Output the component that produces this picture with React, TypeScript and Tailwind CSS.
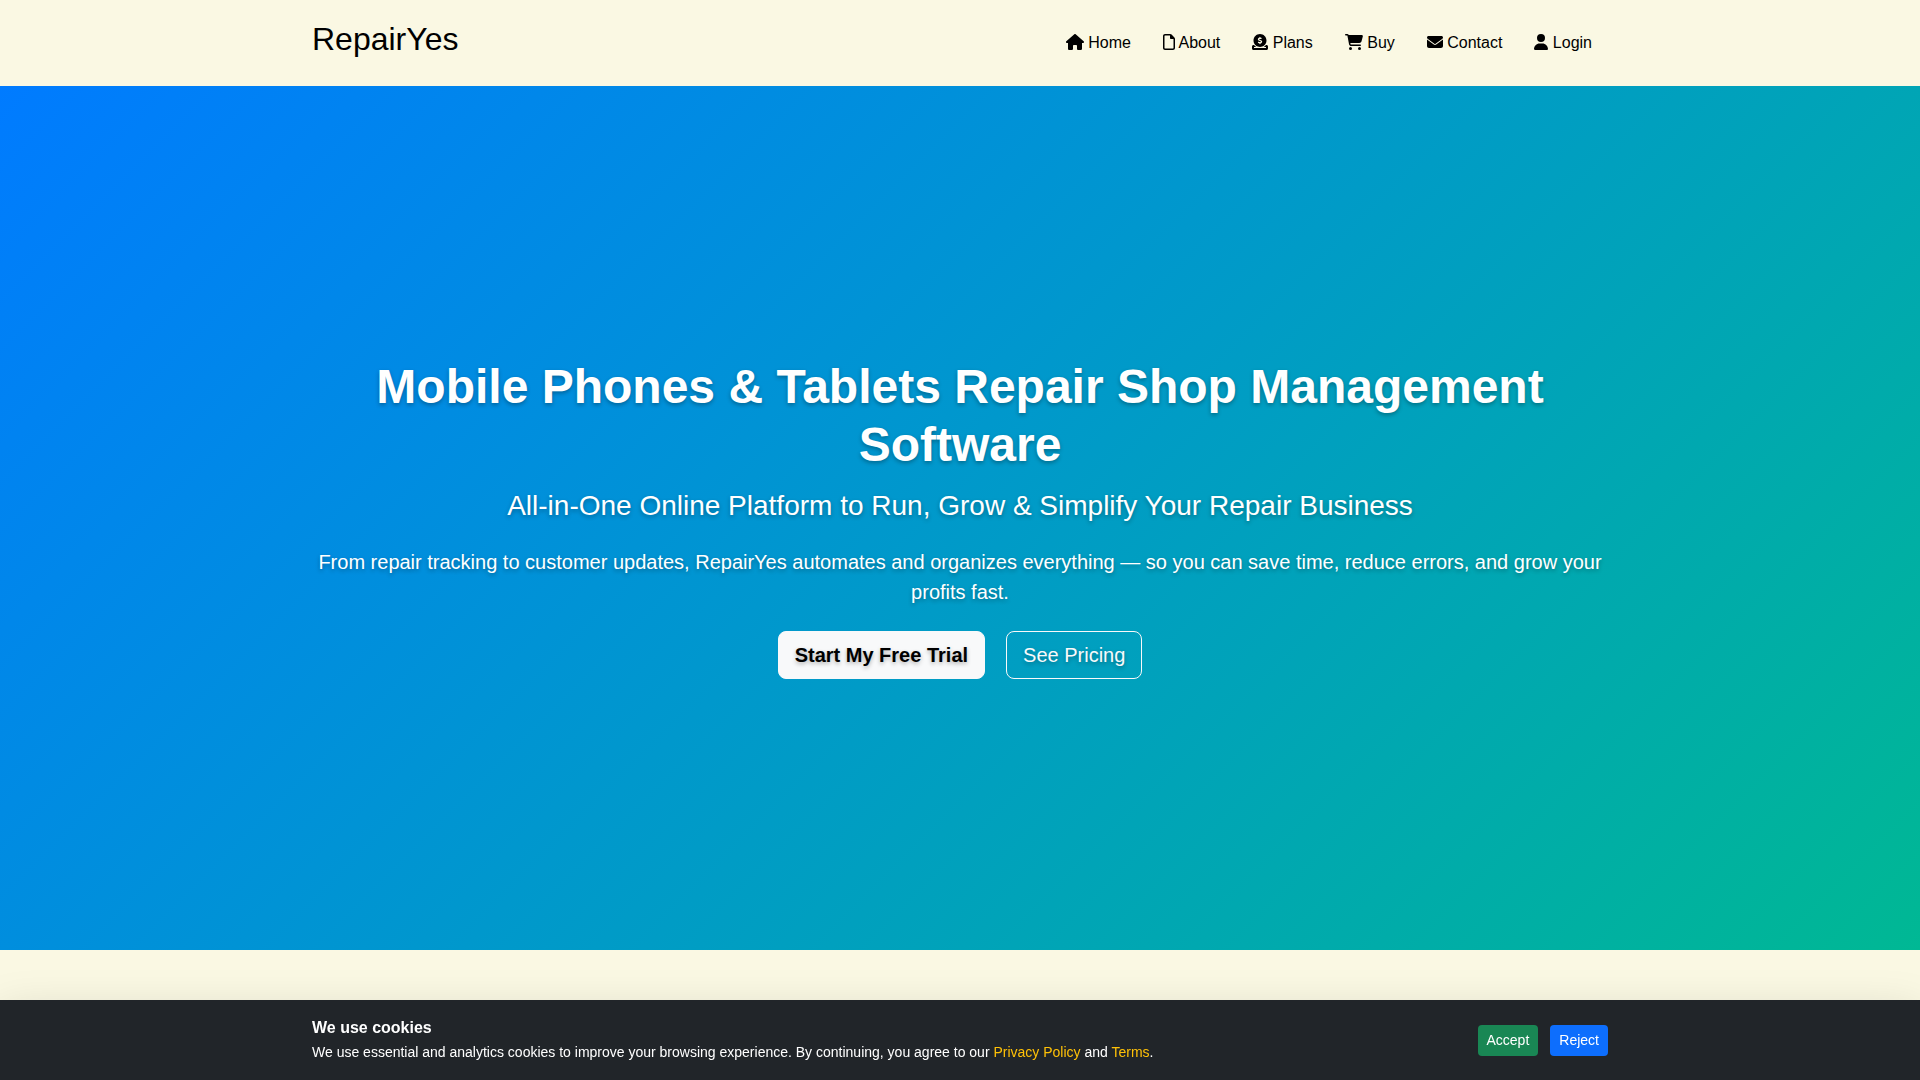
import type { IconType } from 'react-icons';
import {
  FaCartShopping,
  FaCircleDollarToSlot,
  FaEnvelope,
  FaHouse,
  FaRegFile,
  FaUser,
} from 'react-icons/fa6';

interface NavItem {
  label: string;
  href: string;
  icon: IconType;
  iconWidth: string;
}

const navItems: NavItem[] = [
  { label: 'Home', href: '#home', icon: FaHouse, iconWidth: 'w-[18px]' },
  { label: 'About', href: '#about', icon: FaRegFile, iconWidth: 'w-3' },
  { label: 'Plans', href: '#plans', icon: FaCircleDollarToSlot, iconWidth: 'w-4' },
  { label: 'Buy', href: '#buy', icon: FaCartShopping, iconWidth: 'w-[18px]' },
  { label: 'Contact', href: '#contact', icon: FaEnvelope, iconWidth: 'w-4' },
  { label: 'Login', href: '#login', icon: FaUser, iconWidth: 'w-3.5' },
];

function Header() {
  return (
    <header className="py-5">
      <div className="max-w-[1320px] mx-auto px-3 flex items-center justify-between">
        <a href="#home" className="text-[32px] leading-[38px] mb-2">
          RepairYes
        </a>
        <nav className="flex">
          {navItems.map(({ label, href, icon: Icon, iconWidth }) => (
            <a key={label} href={href} className="px-4 text-base whitespace-nowrap">
              <Icon className={`inline-block h-4 align-[-2px] ${iconWidth}`} /> {label}
            </a>
          ))}
        </nav>
      </div>
    </header>
  );
}

function Hero() {
  return (
    <section className="min-h-[80vh] flex items-center bg-[linear-gradient(135deg,#007bff,#00b894)] text-white text-center [text-shadow:0_2px_4px_rgba(0,0,0,0.3)]">
      <div className="w-full max-w-[1320px] mx-auto px-3">
        <h1 className="text-5xl leading-[58px] font-bold mb-[15px]">
          Mobile Phones &amp; Tablets Repair Shop Management Software
        </h1>
        <h2 className="text-[28px] leading-[34px] mb-6">
          All-in-One Online Platform to Run, Grow &amp; Simplify Your Repair Business
        </h2>
        <p className="text-xl leading-[30px] mb-6">
          From repair tracking to customer updates, RepairYes automates and organizes everything — so
          you can save time, reduce errors, and grow your profits fast.
        </p>
        <div className="flex justify-center gap-[21px] text-xl leading-[30px]">
          <a
            href="#trial"
            className="px-4 py-2 border border-[#f8f9fa] rounded-lg bg-[#f8f9fa] text-black font-bold"
          >
            Start My Free Trial
          </a>
          <a href="#plans" className="px-4 py-2 border border-[#f8f9fa] rounded-lg text-[#f8f9fa]">
            See Pricing
          </a>
        </div>
      </div>
    </section>
  );
}

function CookieBanner() {
  return (
    <div className="fixed inset-x-0 bottom-0 py-4 bg-[#212529] text-white shadow-[0_16px_48px_rgba(0,0,0,0.175)]">
      <div className="max-w-[1320px] mx-auto px-3 flex items-center justify-between">
        <div>
          <strong className="block text-base leading-6">We use cookies</strong>
          <p className="text-sm leading-6">
            We use essential and analytics cookies to improve your browsing experience. By continuing,
            you agree to our{' '}
            <a href="#privacy" className="text-[#ffc107]">
              Privacy Policy
            </a>{' '}
            and{' '}
            <a href="#terms" className="text-[#ffc107]">
              Terms
            </a>
            .
          </p>
        </div>
        <div className="flex gap-3 text-sm">
          <button className="h-[31px] px-[9px] rounded bg-[#198754]">Accept</button>
          <button className="h-[31px] px-[9px] rounded bg-[#0d6efd]">Reject</button>
        </div>
      </div>
    </div>
  );
}

export default function App() {
  return (
    <div className="min-h-screen bg-[#faf8e3] text-black font-['Liberation_Sans',Arial,sans-serif]">
      <Header />
      <Hero />
      <CookieBanner />
    </div>
  );
}
